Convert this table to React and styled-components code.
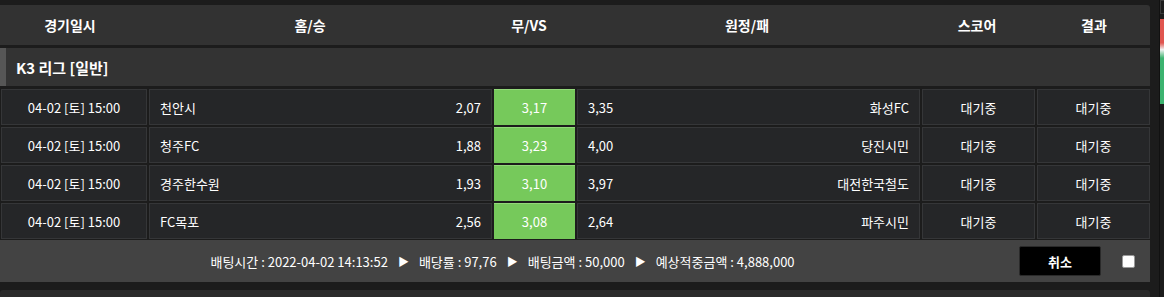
import React from 'react';
import styled, { createGlobalStyle } from 'styled-components';

const GlobalStyle = createGlobalStyle`
    body {
        margin: 0;
        background: #1c1c1c;
        font-family: "Malgun Gothic", "Noto Sans CJK KR", "Noto Sans", sans-serif;
        color: #fff;
    }
`;

const Page = styled.div`
    display: flex;
    align-items: flex-start;
    padding-top: 5px;
    height: 292px;
    overflow: hidden;
`;

const Board = styled.div`
    width: 1150px;
    display: flex;
    flex-direction: column;
    gap: 3px;
`;

const HeaderBar = styled.div`
    display: grid;
    grid-template-columns: 140px 340px 98px 338px 122px 112px;
    height: 40px;
    align-items: center;
    background: #323232;
    border-radius: 0 3px 0 0;
    font-size: 14px;
    font-weight: 700;
    text-align: center;
`;

const League = styled.div`
    display: flex;
    align-items: center;
    height: 38px;
    background: #333;
    border-left: 6px solid #565656;
    padding-left: 10px;
    font-size: 15px;
    font-weight: 700;
`;

const Rows = styled.div`
    display: flex;
    flex-direction: column;
    gap: 2px;
`;

const Row = styled.div`
    display: grid;
    grid-template-columns: 146px 343px 81px 343px 113px 113px;
    gap: 2px;
    padding-left: 1px;
    height: 36px;
`;

const Cell = styled.div`
    display: flex;
    align-items: center;
    justify-content: ${p => p.$center ? 'center' : 'space-between'};
    padding: 0 10px;
    background: #252628;
    border: 1px solid #353638;
    font-size: 13px;
`;

const Pick = styled(Cell)`
    background: #76c95b;
    border: none;
    border-top: 1px solid #93d97a;
`;

const Footer = styled.div`
    display: flex;
    align-items: center;
    height: 42px;
    margin-top: -1px;
    background: #434343;
    font-size: 13px;
`;

const Summary = styled.div`
    flex: 1;
    display: flex;
    align-items: center;
    justify-content: center;
    gap: 10px;
`;

const Arrow = styled.span`
    font-size: 11px;
`;

const CancelButton = styled.button`
    width: 82px;
    height: 30px;
    background: #000;
    border: 1px solid #2a2a2a;
    border-radius: 2px;
    color: #fff;
    font-family: inherit;
    font-size: 13px;
    font-weight: 700;
    margin-left: 14px;
`;

const Check = styled.span`
    width: 11px;
    height: 11px;
    margin: 0 15px 0 21px;
    background: #fff;
    border: 1px solid #999;
    border-radius: 2px;
`;

const NextPanel = styled.div`
    height: 20px;
    margin-top: 5px;
    background: #2a2a2a;
    border-radius: 3px 3px 0 0;
`;

const Side = styled.div`
    margin-left: 9px;
    margin-top: -5px;
    width: 5px;
    height: 300px;
    border-left: 1px solid #111;
    display: flex;
    flex-direction: column;
`;

const SideTop = styled.div`
    height: 12px;
    border: 1px solid #3a3a3a;
    border-right: none;
`;

const SideBar = styled.div`
    margin-top: 5px;
    height: 85px;
    background: linear-gradient(#e0554f 0%, #e0554f 28%, #f2f2f2 36%, #3cb36f 46%, #3cb36f 100%);
`;

const games = [
    { home: '천안시', h: '2,07', d: '3,17', a: '3,35', away: '화성FC' },
    { home: '청주FC', h: '1,88', d: '3,23', a: '4,00', away: '당진시민' },
    { home: '경주한수원', h: '1,93', d: '3,10', a: '3,97', away: '대전한국철도' },
    { home: 'FC목포', h: '2,56', d: '3,08', a: '2,64', away: '파주시민' },
];

export default function App() {
    return (
        <Page>
            <GlobalStyle />
            <Board>
                <HeaderBar>
                    <span>경기일시</span>
                    <span>홈/승</span>
                    <span>무/VS</span>
                    <span>원정/패</span>
                    <span>스코어</span>
                    <span>결과</span>
                </HeaderBar>
                <League>K3 리그 [일반]</League>
                <Rows>
                    {games.map(g => (
                        <Row key={g.home}>
                            <Cell $center>04-02 [토] 15:00</Cell>
                            <Cell><span>{g.home}</span><span>{g.h}</span></Cell>
                            <Pick $center>{g.d}</Pick>
                            <Cell><span>{g.a}</span><span>{g.away}</span></Cell>
                            <Cell $center>대기중</Cell>
                            <Cell $center>대기중</Cell>
                        </Row>
                    ))}
                    <Footer>
                        <Summary>
                            <span>배팅시간 : 2022-04-02 14:13:52</span>
                            <Arrow>▶</Arrow>
                            <span>배당률 : 97,76</span>
                            <Arrow>▶</Arrow>
                            <span>배팅금액 : 50,000</span>
                            <Arrow>▶</Arrow>
                            <span>예상적중금액 : 4,888,000</span>
                        </Summary>
                        <CancelButton>취소</CancelButton>
                        <Check />
                    </Footer>
                </Rows>
                <NextPanel />
            </Board>
            <Side>
                <SideTop />
                <SideBar />
            </Side>
        </Page>
    );
}
